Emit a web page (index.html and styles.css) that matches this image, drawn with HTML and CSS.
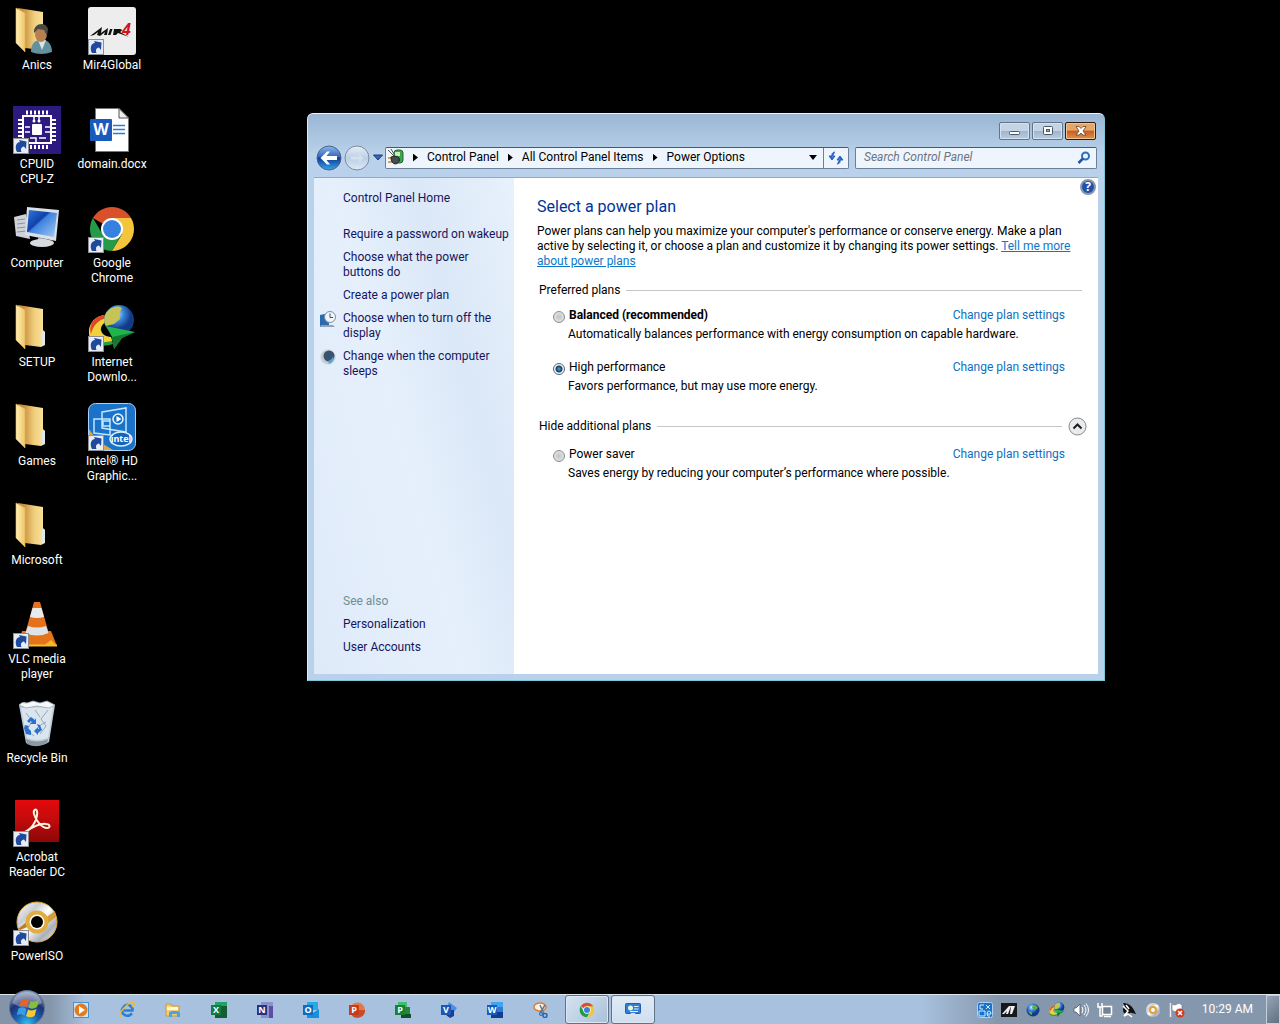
FILE: index.html
```
<!DOCTYPE html>
<html lang="en">
<head>
<meta charset="utf-8">
<title>Power Options</title>
<link rel="stylesheet" href="styles.css">
</head>
<body>

<!-- shared shapes -->
<svg class="defs" width="0" height="0">
  <defs>
    <linearGradient id="gFold" x1="0" x2="1"><stop offset="0" stop-color="#fff0b8"/><stop offset="1" stop-color="#eec566"/></linearGradient>
    <linearGradient id="gFold2" x1="0" x2="1"><stop offset=".2" stop-color="#c98f3c"/><stop offset=".6" stop-color="#f0ce7c"/><stop offset="1" stop-color="#fbe6a0"/></linearGradient>
    <linearGradient id="gScreen" x1="0" x2="1" y2="1"><stop offset="0" stop-color="#2c7ade"/><stop offset=".4" stop-color="#1340a8"/><stop offset=".45" stop-color="#3d83dd"/><stop offset="1" stop-color="#a4ccf5"/></linearGradient>
    <radialGradient id="gGlobe" cx=".4" cy=".3"><stop offset="0" stop-color="#d8f0ff"/><stop offset=".5" stop-color="#3b86d8"/><stop offset="1" stop-color="#123a86"/></radialGradient>
    <linearGradient id="gDisc" x1="0" x2="1" y2="1"><stop offset="0" stop-color="#fff"/><stop offset=".3" stop-color="#c9cdd2"/><stop offset=".5" stop-color="#fff"/><stop offset=".75" stop-color="#aab0bb"/><stop offset="1" stop-color="#f1f1f1"/></linearGradient>
    <linearGradient id="gRed" x2="0" y2="1"><stop offset="0" stop-color="#e2090c"/><stop offset=".4" stop-color="#c80b0c"/><stop offset="1" stop-color="#8b0708"/></linearGradient>
    <linearGradient id="gBlue" x2="0" y2="1"><stop offset="0" stop-color="#8fb7e8"/><stop offset=".45" stop-color="#2f69bd"/><stop offset=".5" stop-color="#0e3c97"/><stop offset="1" stop-color="#37a6ea"/></linearGradient>
    <linearGradient id="gPale" x2="0" y2="1"><stop offset="0" stop-color="#e6eef8"/><stop offset=".5" stop-color="#bccfe4"/><stop offset="1" stop-color="#dde9f6"/></linearGradient>
    <radialGradient id="gOrb" cx=".5" cy=".95" r=".95"><stop offset="0" stop-color="#2cc4f2"/><stop offset=".35" stop-color="#1a62b0"/><stop offset=".65" stop-color="#1c3274"/><stop offset="1" stop-color="#9aabc4"/></radialGradient>

    <symbol id="shortcut" viewBox="0 0 16 16">
      <rect x=".5" y=".5" width="15" height="15" fill="#e6edf6" stroke="#8f8f93"/>
      <path d="M4 14C1.500 9 3 4.500 7 4L6 2L13.500 3.500L13 11L11 8.500C8 9 7.500 11 8.500 14Z" fill="#20489c"/>
    </symbol>
    <symbol id="folder" viewBox="0 0 48 48">
      <path d="M5 1L30 5V26L32 28V41L28 43L12 41Z" fill="url(#gFold2)"/>
      <path d="M30 27l2 1v12l-3 2V29z" fill="#dfe8ee"/>
      <path d="M3 1L12 6V45L3 36Z" fill="url(#gFold)" stroke="#e2b65c" stroke-width=".6"/>
    </symbol>
    <symbol id="chrome" viewBox="0 0 48 48">
      <path d="M24 24L4.950 13A22 22 0 0 1 43.050 13Z" fill="#d9512c"/>
      <path d="M24 46A22 22 0 0 1 4.950 13L15 30L24 35L33 30Z" fill="#259a47"/>
      <path d="M24 13H43.050A22 22 0 0 1 24 46L34 29Z" fill="#f3c53d"/>
      <circle cx="24" cy="24" r="11" fill="#fff"/>
      <circle cx="24" cy="24" r="9" fill="#3681e0"/>
    </symbol>
    <symbol id="globe" viewBox="0 0 48 48">
      <path d="M20 11C5 10-2 24 2 37C8 42 16 43 25 40L23 33C12 33 9 21 20 17Z" fill="#2a9d3e"/>
      <path d="M20 11C5 10-2 24 2 33C8 39 16 39 24 37L23 33C11 33 9 21 20 17Z" fill="#f3d13c"/>
      <path d="M20 11C7 10 0 20 3 30C5 22 10 15 20 14Z" fill="#df4a24"/>
      <circle cx="31" cy="16" r="15" fill="url(#gGlobe)"/>
      <path d="M18 9C23 2 31 1 34 4L31 10L32 15L26 20L18 22C15 18 16 13 18 9Z" fill="#c5c455"/>
      <path d="M18 22L47 28L34 34L26 45L24 33Z" fill="#1fb54a"/>
      <path d="M24 33L47 28L34 34L26 45Z" fill="#147a30"/>
    </symbol>
    <symbol id="disc" viewBox="0 0 48 48">
      <circle cx="24" cy="24" r="20" fill="url(#gDisc)" stroke="#dda53c"/>
      <path d="M5 31L16 22L14 29L7 32Z" fill="#b77f20"/>
      <path d="M31 21L42 13L43 19L34 26Z" fill="#d49d38"/>
      <circle cx="24" cy="24" r="9.500" fill="#fff" stroke="#e3ac3e" stroke-width="4"/>
      <circle cx="24" cy="24" r="6" fill="#000"/>
    </symbol>
    <symbol id="flag" viewBox="0 0 24 24">
      <path d="M4 5Q8 1 12 4L10 11Q6 8 2 11Z" fill="#e2662a"/>
      <path d="M13.500 5Q17 7 22 4L20 11Q15 14 11.500 11.500Z" fill="#86bf40"/>
      <path d="M1.500 12.500Q6 10 9.500 13L7.500 20Q4 17-.5 19.500Z" fill="#3b9be3"/>
      <path d="M11 13.500Q15 15.500 19.500 13L17.500 20Q13 22.500 9 20Z" fill="#f7c937"/>
    </symbol>
    <symbol id="control" viewBox="0 0 16 16">
      <rect x=".5" y="1.500" width="15" height="10" rx="1" fill="#2f7fd2" stroke="#1e5da8"/>
      <circle cx="5.500" cy="6" r="2.500" fill="#eef6d8"/>
      <path d="M9 4.500h4.500M9 7h4.500M5 9.500h8" stroke="#e4f2ff"/>
      <path d="M6 11h4l2 4H4z" fill="#d9e1ea"/>
    </symbol>
  </defs>
</svg>

<main class="desktop">
  <ul class="icons">
    <li><a href="#">
      <svg width="48" height="48" viewBox="0 0 48 48"><use href="#folder"/><path d="M18 45C18 35 24 32 30 33C36 33 39 39 39 45Q28 49 18 45Z" fill="#64909f"/><path d="M25 33L29 43L33 33Z" fill="#d8e6e4"/><ellipse cx="28" cy="27" rx="6" ry="8" fill="#b68050"/><path d="M21 26C20 16 33 14 35 22L34 29L31 23L25 22Z" fill="#4b4a42"/></svg>
      <span>Anics</span></a></li>
    <li><a href="#">
      <svg width="48" height="48" viewBox="0 0 48 48"><path d="M0 0H48V48H0Z" fill="#2c1a80"/><path d="M14 4.500v4M18 4.500v4M22 4.500v4M26 4.500v4M30 4.500v4M34 4.500v4M18 39v4M22 39v4M26 39v4M30 39v4M34 39v4M5 14h4M5 18h4M5 22h4M5 26h4M5 30h4M39 14h4M39 18h4M39 22h4M39 26h4M39 30h4M39 34h4" stroke="#fff" stroke-width="2"/><rect x="10" y="10" width="28" height="27" fill="none" stroke="#fff" stroke-width="2"/><rect x="19" y="18" width="10" height="11" rx="1" fill="#fff"/><path d="M21 11v5M26 11v5M12 21h5M12 26h5M32 21h5M32 26h5M17 32h6v4M26 32h7" stroke="#fff" stroke-width="1.500" fill="none"/><circle cx="21" cy="15" r="1.500" fill="#fff"/><circle cx="26" cy="15" r="1.500" fill="#fff"/><use href="#shortcut" x="0" y="32" width="16" height="16"/></svg>
      <span>CPUID<br>CPU-Z</span></a></li>
    <li><a href="#">
      <svg width="48" height="48" viewBox="0 0 48 48"><path d="M1 12L13 9L17 34L3 31Z" fill="#cdd3d8"/><path d="M4 15l8-1M4 19l8-1M4 23l9-1M4 27l9-1" stroke="#8b959c"/><path d="M14 2L46 5L43 36L12 30Z" fill="#dbe0e6"/><path d="M16 5L44 8L41 32L14 27Z" fill="url(#gScreen)"/><path d="M25 32l8 2v5h-8z" fill="#aab2b9"/><ellipse cx="29" cy="38" rx="12" ry="4" fill="#d6dbdf"/></svg>
      <span>Computer</span></a></li>
    <li><a href="#"><svg width="48" height="48"><use href="#folder"/></svg><span>SETUP</span></a></li>
    <li><a href="#"><svg width="48" height="48"><use href="#folder"/></svg><span>Games</span></a></li>
    <li><a href="#"><svg width="48" height="48"><use href="#folder"/></svg><span>Microsoft</span></a></li>
    <li><a href="#">
      <svg width="48" height="48" viewBox="0 0 48 48"><path d="M9 30H38L44 45H5Z" fill="#e47419"/><path d="M8 44.500H44" stroke="#f6c02c" stroke-width="2"/><path d="M38 39L44 45H30Z" fill="#f7b532"/><path d="M21 1H27L36 33Q24 38 12 33Z" fill="#e4711c"/><path d="M19.500 7H28.500L31 16Q24 18 17 16Z" fill="#e8ecef"/><path d="M15 25Q24 28 33 25L35.500 32Q24 37 12.500 32Z" fill="#dfe4e8"/><use href="#shortcut" x="0" y="32" width="16" height="16"/></svg>
      <span>VLC media<br>player</span></a></li>
    <li><a href="#">
      <svg width="48" height="48" viewBox="0 0 48 48"><path d="M6 5H42L36 42Q25 49 13 43Z" fill="#bccbd8"/><path d="M8 8L40 7L35 38Q24 42 14 38Z" fill="#dbe5ee"/><path d="M6 5Q9 1 14 3L20 1L27 3L34 1L42 5L36 8L24 6L13 8Z" fill="#f6f9fb" stroke="#99a7b2" stroke-width=".8"/><path d="M13 13l6 8-5 9 7 6M35 10l-7 9 5 7-6 8M22 10l5 7M26 26l7-4" stroke="#96a8b8" fill="none"/><path d="M13 39Q24 44 35 39L34 43Q24 49 14 44Z" fill="#8d979f"/><path d="M14 21l4-4 4 3 1-2v6h-6l2-2-1-1-2 2zM24 24l3 1 2 5-4 3v2l-4-4 4-4v2h1zM12 25l4 1-1 2 3 3v4l-5-1-2-6z" fill="#2871cf"/></svg>
      <span>Recycle Bin</span></a></li>
    <li><a href="#">
      <svg width="48" height="48" viewBox="0 0 48 48"><path d="M2 1H46V43H2Z" fill="url(#gRed)"/><path d="M12 33C21 29 25 18 24 12C23 9 20 11 21 15C23 22 29 29 34 29C38 29 37 25 33 25C27 24 20 28 14 32" fill="none" stroke="#fff3df" stroke-width="2"/><use href="#shortcut" x="0" y="32" width="16" height="16"/></svg>
      <span>Acrobat<br>Reader DC</span></a></li>
    <li><a href="#"><svg width="48" height="48" viewBox="0 0 48 48"><use href="#disc" width="48" height="48"/><use href="#shortcut" x="0" y="32" width="16" height="16"/></svg><span>PowerISO</span></a></li>
  </ul>
  <ul class="icons">
    <li><a href="#">
      <svg width="48" height="48" viewBox="0 0 48 48"><rect width="48" height="48" rx="3" fill="#ededed"/><path d="M2 29L14 20L13 26L20 21L19 28H16L17 25L12 29L9 28L10 25L6 28Z" fill="#111"/><path d="M22 22h2.500l-2 6H20zM26 22h6q4 1 0 3l9 5-11-4-2 2h-3z" fill="#111"/><text x="34" y="28" class="mir">4</text><use href="#shortcut" x="0" y="32" width="16" height="16"/></svg>
      <span>Mir4Global</span></a></li>
    <li><a href="#">
      <svg width="48" height="48" viewBox="0 0 48 48"><path d="M7.500 2.500H31L40.500 12V45.500H7.500Z" fill="#fff" stroke="#777"/><path d="M31 2.500V12H40.500Z" fill="#eee" stroke="#555"/><path d="M25 19.500h12M25 23.500h12M25 27.500h12" stroke="#2b7cd3" stroke-width="1.500"/><rect x="2" y="13" width="22" height="22" rx="1" fill="#185abd"/><text x="13" y="29" class="glyph big">W</text></svg>
      <span>domain.docx</span></a></li>
    <li><a href="#"><svg width="48" height="48" viewBox="0 0 48 48"><use href="#chrome" width="48" height="48"/><use href="#shortcut" x="0" y="32" width="16" height="16"/></svg><span>Google<br>Chrome</span></a></li>
    <li><a href="#"><svg width="48" height="48" viewBox="0 0 48 48"><use href="#globe" width="48" height="48"/><use href="#shortcut" x="0" y="32" width="16" height="16"/></svg><span>Internet<br>Downlo...</span></a></li>
    <li><a href="#">
      <svg width="48" height="48" viewBox="0 0 48 48"><rect x=".5" y=".5" width="47" height="47" rx="7" fill="#1a72c9" stroke="#a9d3f6"/><path d="M1 26Q8 38 25 47H6Q1 46 1 40Z" fill="#e3a83d"/><path d="M14 9L38 5V29L14 25ZM6 16H22V32L6 30ZM15 18h7v5h-7z" fill="none" stroke="#bfe7ff" stroke-width="1.500"/><circle cx="30" cy="16" r="5" fill="none" stroke="#e5f6ff" stroke-width="1.500"/><path d="M28.500 13l5 3-5 3z" fill="#fff"/><ellipse cx="33" cy="36" rx="11" ry="7" fill="#1464b8" stroke="#d7efff" stroke-width="1.500"/><text x="33" y="39" class="glyph">intel</text><use href="#shortcut" x="0" y="32" width="16" height="16"/></svg>
      <span>Intel® HD<br>Graphic...</span></a></li>
  </ul>

  <section class="window">
    <div class="titlebar">
      <button class="min" aria-label="Minimize"><svg width="12" height="12"><rect x=".5" y="6.500" width="10" height="3" rx="1" fill="#fff" stroke="#4a5664"/></svg></button>
      <button class="max" aria-label="Maximize"><svg width="12" height="12"><rect x="1.500" y="1.500" width="9" height="8" rx="1" fill="#fff" stroke="#4a5664"/><rect x="4.500" y="4.500" width="3" height="2" fill="#aebdd0" stroke="#4a5664"/></svg></button>
      <button class="close" aria-label="Close"><svg width="12" height="12"><path d="M1 1.500h3l2 2 2-2h3L8 6l3 4H8L6 8l-2 2H1l3-4z" fill="#fff" stroke="#5b4238" stroke-width=".8"/></svg></button>
    </div>

    <div class="navbar">
      <div class="history">
        <button aria-label="Back"><svg width="26" height="26"><circle cx="13" cy="13" r="12" fill="url(#gBlue)" stroke="#4c6387"/><path d="M4.500 13L11 6.500h3L10.500 11H21v4H10.500L14 19.500h-3z" fill="#fff"/></svg></button>
        <button aria-label="Forward"><svg width="26" height="26"><circle cx="13" cy="13" r="12" fill="url(#gPale)" stroke="#7c8b9f"/><path d="M19.500 13L15 8.500v3H7v3h8v3z" fill="#d3e0ee"/></svg></button>
        <button aria-label="Recent pages"><svg width="10" height="7"><path d="M.5 1h9L5 6z" fill="#3a66b4" stroke="#1d3d7a"/></svg></button>
      </div>
      <div class="address">
        <svg width="17" height="18"><path d="M1 1l6 6M4 0l3 5" stroke="#555" fill="none"/><rect x="7" y="1" width="9" height="13" rx="3" fill="#3aa849" stroke="#2b6034"/><path d="M8 3h5v4H8z" fill="#c6efc5"/><path d="M1 9h5M1 13h5" stroke="#c98a36" stroke-width="1.500"/><path d="M4 8q6-2 8 1t-3 6q-5 0-5-7z" fill="#4a4d4d" stroke="#222"/></svg>
        <i class="tri"></i>
        <a href="#">Control Panel</a><i class="tri"></i>
        <a href="#">All Control Panel Items</a><i class="tri"></i>
        <a href="#">Power Options</a>
        <button class="drop" aria-label="Previous locations"><i class="tri down"></i></button>
        <button class="refresh" aria-label="Refresh"><svg width="16" height="16"><path d="M7 2Q3 2 4 8M1 6h6L4 10zM9 14q4 0 3-6M9 10h6l-3-4z" fill="#2a62c4" stroke="#2a62c4" fill-rule="evenodd"/></svg></button>
      </div>
      <div class="search">
        <input type="text" placeholder="Search Control Panel" aria-label="Search Control Panel">
        <svg width="14" height="14"><circle cx="8.500" cy="5" r="3.500" fill="#e8f3ff" stroke="#2f6fc0" stroke-width="2"/><path d="M6 7.500L1.500 12" stroke="#2a4f9c" stroke-width="2.500"/></svg>
      </div>
    </div>

    <div class="client">
      <nav class="tasks">
        <a class="home" href="#">Control Panel Home</a>
        <a href="#">Require a password on wakeup</a>
        <a href="#">Choose what the power<br>buttons do</a>
        <a href="#">Create a power plan</a>
        <a class="with-icon" href="#"><svg width="16" height="16"><path d="M0 4l9-2v12l-9 2z" fill="#2c6aae"/><path d="M1 14h12l2 2H0z" fill="#8fa3b5"/><circle cx="10" cy="6" r="5.500" fill="#f1f5f8" stroke="#7890a6"/><path d="M10 2.500V6.500H13" stroke="#37506e" fill="none"/></svg>Choose when to turn off the<br>display</a>
        <a class="with-icon" href="#"><svg width="16" height="16"><circle cx="8" cy="8" r="7.500" fill="#c3ccd4" stroke="#dbe2e8"/><circle cx="9" cy="7" r="5.500" fill="#39536c"/><path d="M8 12q4-1 5-5 2 6-4 8z" fill="#57a6d9"/></svg>Change when the computer<br>sleeps</a>
        <span class="also">See also</span>
        <a href="#">Personalization</a>
        <a href="#">User Accounts</a>
      </nav>

      <div class="content">
        <button class="help" aria-label="Help"><svg width="16" height="16"><circle cx="8" cy="8" r="7" fill="#2450a8" stroke="#8797ae" stroke-width="2"/><text x="8" y="12" class="glyph help-mark">?</text></svg></button>
        <h1>Select a power plan</h1>
        <p class="intro">Power plans can help you maximize your computer's performance or conserve energy. Make a plan<br>
        active by selecting it, or choose a plan and customize it by changing its power settings. <a href="#">Tell me more<br>
        about power plans</a></p>

        <h2><span>Preferred plans</span></h2>
        <div class="plan">
          <input type="radio" name="plan" id="balanced">
          <label for="balanced"><b>Balanced (recommended)</b></label>
          <a href="#">Change plan settings</a>
          <p>Automatically balances performance with energy consumption on capable hardware.</p>
        </div>
        <div class="plan">
          <input type="radio" name="plan" id="high" checked>
          <label for="high">High performance</label>
          <a href="#">Change plan settings</a>
          <p>Favors performance, but may use more energy.</p>
        </div>

        <h2 class="more"><span>Hide additional plans</span>
          <button aria-label="Hide additional plans"><svg width="19" height="19"><circle cx="9.500" cy="9.500" r="8.500" fill="#e9ebee" stroke="#85888e"/><path d="M5.500 11.500l4-4 4 4" fill="none" stroke="#1d1d1d" stroke-width="2"/></svg></button></h2>
        <div class="plan">
          <input type="radio" name="plan" id="saver">
          <label for="saver">Power saver</label>
          <a href="#">Change plan settings</a>
          <p>Saves energy by reducing your computer’s performance where possible.</p>
        </div>
      </div>
    </div>
  </section>
</main>

<footer class="taskbar">
  <button class="start" aria-label="Start"><svg width="38" height="34"><circle cx="19" cy="18" r="17.500" fill="url(#gOrb)" stroke="#5d7396"/><path d="M4 13Q19 22 34 13Q30 2 19 2T4 13Z" fill="#fff" opacity=".3"/><use href="#flag" x="9" y="6" width="24" height="24"/></svg></button>
  <button class="app" aria-label="Media Player"><svg width="16" height="16"><rect x=".5" y=".5" width="15" height="15" fill="#cfe3f5" stroke="#4a90cf"/><circle cx="8" cy="8" r="6.500" fill="#e37a1c"/><path d="M6 4l6 4-6 4z" fill="#fff"/></svg></button>
  <button class="app" aria-label="Internet Explorer"><svg width="16" height="16"><path d="M13 11.500Q9 15.500 5 12.500T4.500 5T12 4.500Q14 6.500 13.500 8.500H4.500" fill="none" stroke="#2a7fd8" stroke-width="2.500"/><path d="M1.500 15Q-1 12 6 5T15 1.500Q16 3 13 5" fill="none" stroke="#f0b93a" stroke-width="1.500"/></svg></button>
  <button class="app" aria-label="Explorer"><svg width="16" height="16"><path d="M1 2h5l1 2h7v10H1z" fill="#f0cf78" stroke="#c99c45"/><path d="M2 5h11v3H2z" fill="#fff6d2"/><path d="M4 15v-4q0-2 4-2h3q4 0 4 2v4h-3v-3H7v3z" fill="#4aa2e0"/></svg></button>
  <button class="app" aria-label="Excel"><svg width="16" height="16"><path d="M4 0h12v16H4z" fill="#21a366"/><path d="M10 4h6v12H4v-4h6z" fill="#185c37"/><rect y="3" width="10" height="10" fill="#107c41"/><text x="5" y="11" class="glyph">X</text></svg></button>
  <button class="app" aria-label="OneNote"><svg width="16" height="16"><path d="M4 0h12v16H4z" fill="#8a93c8"/><path d="M12 4h4v12h-4z" fill="#5b4ea6"/><rect y="3" width="10" height="10" fill="#28337f"/><text x="5" y="11" class="glyph">N</text></svg></button>
  <button class="app" aria-label="Outlook"><svg width="16" height="16"><path d="M4 0h11v8H4z" fill="#28a8ea"/><path d="M4 7l6 4 6-4v9H4z" fill="#1490df"/><rect y="3" width="10" height="10" fill="#0f6cbd"/><text x="5" y="11" class="glyph">O</text></svg></button>
  <button class="app" aria-label="PowerPoint"><svg width="16" height="16"><circle cx="8.500" cy="8" r="7.500" fill="#e57847"/><path d="M8.500 8h7.500a7.500 7.500 0 0 1-14 4z" fill="#c94b2a"/><rect y="3" width="10" height="10" fill="#c43e1c"/><text x="5" y="11" class="glyph">P</text></svg></button>
  <button class="app" aria-label="Project"><svg width="16" height="16"><path d="M3 0h9v5H3z" fill="#3fbf6a"/><path d="M6 5h9v7H6z" fill="#21883e"/><path d="M6 12h10v4H6z" fill="#12502a"/><rect y="3" width="10" height="10" fill="#188038"/><text x="5" y="11" class="glyph">P</text></svg></button>
  <button class="app" aria-label="Visio"><svg width="16" height="16"><path d="M8 0l8 6-7 9-5-6z" fill="#4a8fe0"/><path d="M5 8h8v6l-4 2-4-3z" fill="#203a8c"/><rect y="3" width="10" height="10" fill="#1d57b5"/><text x="5" y="11" class="glyph">V</text></svg></button>
  <button class="app" aria-label="Word"><svg width="16" height="16"><path d="M4 0h12v5H4z" fill="#41a5ee"/><path d="M4 5h12v5H4z" fill="#2b7cd3"/><path d="M4 10h12v6H4z" fill="#103f91"/><rect y="3" width="10" height="10" fill="#185abd"/><text x="5" y="11" class="glyph">W</text></svg></button>
  <button class="app" aria-label="Snipping Tool"><svg width="16" height="16"><ellipse cx="7" cy="5" rx="6" ry="4" fill="#fdf5ec" stroke="#dd7c36" stroke-width="1.500"/><path d="M7 3l4 9M12 3L7 11" stroke="#6d7684" stroke-width="1.500"/><circle cx="12" cy="13.500" r="2" fill="none" stroke="#2467b8" stroke-width="1.500"/><circle cx="8" cy="12" r="1.500" fill="none" stroke="#2467b8"/></svg></button>
  <button class="app open" aria-label="Google Chrome"><svg width="16" height="16"><use href="#chrome" width="16" height="16"/></svg></button>
  <button class="app open active" aria-label="Power Options"><svg width="16" height="16"><use href="#control" width="16" height="16"/></svg></button>

  <div class="tray">
    <svg width="16" height="16"><rect x=".5" y=".5" width="15" height="15" rx="2" fill="#1a72c9" stroke="#a9d3f6"/><path d="M2 9h6v5H2zM3 3h4M3 3v4h3M9 3l4 4M13 3L9 7M10 12h4q0-3-2-3t-2 3 3 2" fill="none" stroke="#d8f0ff"/></svg>
    <svg width="16" height="16"><path d="M0 1h16v14H0z" fill="#16181b"/><path d="M1 12L8 4h2l-3 8H5l1-3-3 3zM10 4h4l-3 8H9z" fill="#f1f1f1"/></svg>
    <svg width="16" height="16"><circle cx="8" cy="8" r="6.500" fill="url(#gGlobe)"/><path d="M8 3q4 0 5 3l-3 2-3-2zM3 9l4 1v3q-3-1-4-4z" fill="#5fae4a"/></svg>
    <svg width="16" height="16"><use href="#globe" width="16" height="16"/></svg>
    <svg width="16" height="16"><path d="M1 6h2l4-4v12l-4-4H1z" fill="#fff" stroke="#4b5868" stroke-width=".8"/><path d="M9 5q2 3 0 6M11 3q4 5 0 10M13 1.500q5 6.500 0 13" fill="none" stroke="#fff"/></svg>
    <svg width="16" height="16"><rect x="5.500" y="4.500" width="9" height="8" fill="#738397" stroke="#fff" stroke-width="1.500"/><path d="M1 1v4h4V1M3 5v9h3M7 14.500h7" fill="none" stroke="#fff" stroke-width="1.500"/></svg>
    <svg width="16" height="16"><path d="M2 1q8-1 13 11l-8-2z" fill="#111"/><circle cx="6" cy="8" r="4" fill="#111"/><path d="M2 4l5 5-4 5 4-2 4 3M5 3l3 4" stroke="#fff" stroke-width="1.500" fill="none"/></svg>
    <svg width="16" height="16"><circle cx="8" cy="8" r="7" fill="url(#gDisc)"/><circle cx="8" cy="8" r="3" fill="#fff" stroke="#dfa238" stroke-width="2"/></svg>
    <svg width="16" height="16"><path d="M1.500 1v14" stroke="#e8edf2" stroke-width="1.500"/><path d="M3 2q3 2 5 0t5 1v6q-3-2-5 0T3 8z" fill="#fff" stroke="#65717f" stroke-width=".6"/><circle cx="11" cy="11" r="4.500" fill="#d23a22"/><path d="M9 9l4 4M13 9l-4 4" stroke="#fff" stroke-width="1.500"/></svg>
    <time>10:29 AM</time>
  </div>
  <button class="show-desktop" aria-label="Show desktop"></button>
</footer>

</body>
</html>
```

FILE: styles.css
```
* {
  box-sizing: border-box;
}

body {
  margin: 0;
  height: 100vh;
  display: flex;
  flex-direction: column;
  overflow: hidden;
  background: #000;
  font: 12px/15px "Segoe UI", Roboto, "Noto Sans", sans-serif;
}

a {
  text-decoration: none;
}

a:hover {
  text-decoration: underline;
}

button {
  padding: 0;
  border: 0;
  background: none;
  font: inherit;
  display: flex;
  align-items: center;
  justify-content: center;
}

svg {
  display: block;
  flex: none;
}

.defs {
  position: absolute;
}

.glyph {
  font: bold 9px "Open Sans", sans-serif;
  fill: #fff;
  text-anchor: middle;
}

.big {
  font-size: 16px;
}

.help-mark {
  font-size: 12px;
}

.mir {
  font: italic bold 16px "Open Sans", sans-serif;
  fill: #d3121a;
}

/* desktop */
.desktop {
  flex: 1;
  min-height: 0;
  position: relative;
  display: flex;
  gap: 1px;
}

.icons {
  list-style: none;
  margin: 0;
  padding: 7px 0 0;
  width: 74px;
}

.icons li {
  height: 99px;
}

.icons a {
  display: flex;
  flex-direction: column;
  align-items: center;
  gap: 3px;
  color: #fff;
  text-align: center;
  white-space: nowrap;
}

/* window */
.window {
  position: absolute;
  left: 307px;
  top: 113px;
  width: 798px;
  min-height: 568px;
  display: flex;
  flex-direction: column;
  padding: 0 6px 6px;
  border: 1px solid #7cc4d8;
  border-top-color: #eef6fb;
  border-left-color: #dcebf6;
  border-radius: 6px 6px 0 0;
  background: linear-gradient(#9ab6d3, #b9d1ea 40px);
}

.titlebar {
  display: flex;
  justify-content: flex-end;
  gap: 2px;
  height: 29px;
  padding: 8px 2px 0 0;
}

.titlebar button {
  width: 31px;
  height: 18px;
  border: 1px solid #64758a;
  border-radius: 2px;
  box-shadow: inset 0 0 0 1px #d5e2ef;
  background: linear-gradient(#c4d4e5 50%, #9fb5cd 50%, #b8cde2);
}

.titlebar .close {
  border-color: #2d1c14;
  box-shadow: inset 0 0 0 1px #f0c596;
  background: linear-gradient(#e3a768 45%, #cc5a26 50%, #dd9440);
}

.navbar {
  display: flex;
  align-items: center;
  height: 34px;
  padding: 0 1px 5px 2px;
  gap: 6px;
}

.history {
  display: flex;
  align-items: center;
  width: 63px;
  gap: 2px;
}

.history button:last-child {
  margin-left: 1px;
}

.address,
.search {
  display: flex;
  align-items: center;
  height: 22px;
  border: 1px solid #6b7f99;
  border-top-color: #4b5768;
  border-radius: 2px;
  background: #eff5fd;
}

.address {
  flex: 1;
  gap: 9px;
  padding-left: 1px;
}

.address a {
  color: #000;
}

.tri {
  width: 5px;
  height: 8px;
  background: #000;
  clip-path: polygon(0 0, 100% 50%, 0 100%);
}

.down {
  width: 8px;
  height: 5px;
  clip-path: polygon(0 0, 100% 0, 50% 100%);
}

.drop {
  margin-left: auto;
  width: 12px;
  height: 20px;
}

.refresh {
  margin-left: -5px;
  width: 25px;
  height: 20px;
  border-left: 1px solid #6b7f99;
}

.search {
  width: 242px;
  padding: 0 5px 0 8px;
}

.search input {
  flex: 1;
  min-width: 0;
  padding: 0;
  border: 0;
  outline: 0;
  background: none;
  font: inherit;
}

.search input::placeholder {
  color: #6c7480;
  font-style: italic;
  opacity: 1;
}

.client {
  flex: 1;
  display: flex;
  border-top: 1px solid #93a9c2;
  background: #fff;
}

/* left pane */
.tasks {
  width: 200px;
  display: flex;
  flex-direction: column;
  gap: 8px;
  padding: 13px 0 19px 29px;
  background: linear-gradient(75deg, #dfeaf9, #e6f0fc 45%, #dbe8f7 70%, #e8f1fc);
}

.tasks a {
  color: #15155e;
  white-space: nowrap;
}

.tasks .home {
  margin-bottom: 13px;
}

.tasks .with-icon {
  position: relative;
}

.with-icon svg {
  position: absolute;
  left: -23px;
  top: 0;
}

.also {
  margin-top: auto;
  color: #6f8f92;
}

/* right pane */
.content {
  position: relative;
  flex: 1;
  min-width: 0;
  padding: 19px 16px 0 23px;
  color: #000;
}

.help {
  position: absolute;
  top: 1px;
  right: 2px;
}

h1 {
  margin: 0 0 7px;
  font-size: 16px;
  font-weight: normal;
  line-height: 20px;
  color: #003399;
}

.intro {
  margin: 0 0 14px;
  white-space: nowrap;
}

.intro a {
  color: #0d78c8;
  text-decoration: underline;
}

h2 {
  display: flex;
  align-items: center;
  gap: 6px;
  margin: 0 0 10px;
  padding-left: 2px;
  font: inherit;
}

h2::after {
  content: "";
  flex: 1;
  height: 1px;
  background: #c8c8c8;
}

h2.more {
  height: 19px;
  margin: 23px -5px 11px 0;
}

.more button {
  order: 1;
}

.plan {
  display: grid;
  grid-template-columns: 12px 1fr auto;
  column-gap: 4px;
  row-gap: 4px;
  align-items: center;
  margin-bottom: 18px;
  padding: 0 17px 0 16px;
}

.plan input {
  appearance: none;
  width: 12px;
  height: 12px;
  margin: 2px 0 0;
  border: 1px solid #8a8d90;
  border-radius: 50%;
  background: radial-gradient(#bfc3c6, #eee);
}

.plan input:checked {
  border-color: #54667c;
  background: radial-gradient(#4aa6dc, #173a62 3px, #f2f5f8 4px);
}

.plan a {
  color: #0d6fc0;
}

.plan p {
  grid-column: 1 / -1;
  margin: 0 0 0 15px;
}

/* taskbar */
.taskbar {
  display: flex;
  align-items: flex-end;
  height: 30px;
  border-top: 1px solid #dde6ef;
  background: linear-gradient(90deg, #8495a9 50px, #a8c1de 85px, #a8c1de 72%, #8597ac 78%);
}

.start {
  width: 58px;
  height: 34px;
  padding-right: 4px;
}

.app {
  width: 44px;
  height: 29px;
  margin: 0 1px;
}

.app.open {
  border: 1px solid #5f7288;
  border-radius: 3px;
  box-shadow: inset 0 0 0 1px #dbe8f4;
  background: linear-gradient(135deg, #d5e3f1, #a9c0da);
}

.app.active {
  background: linear-gradient(#dfeaf5, #cfdff0);
}

.tray {
  margin-left: auto;
  height: 29px;
  display: flex;
  align-items: center;
  gap: 8px;
  color: #fff;
}

.tray time {
  margin: 0 13px 0 9px;
}

.show-desktop {
  width: 14px;
  height: 29px;
  border: 1px solid #c3cfdb;
  background: linear-gradient(135deg, #98a5b5, #606f82);
}
```
